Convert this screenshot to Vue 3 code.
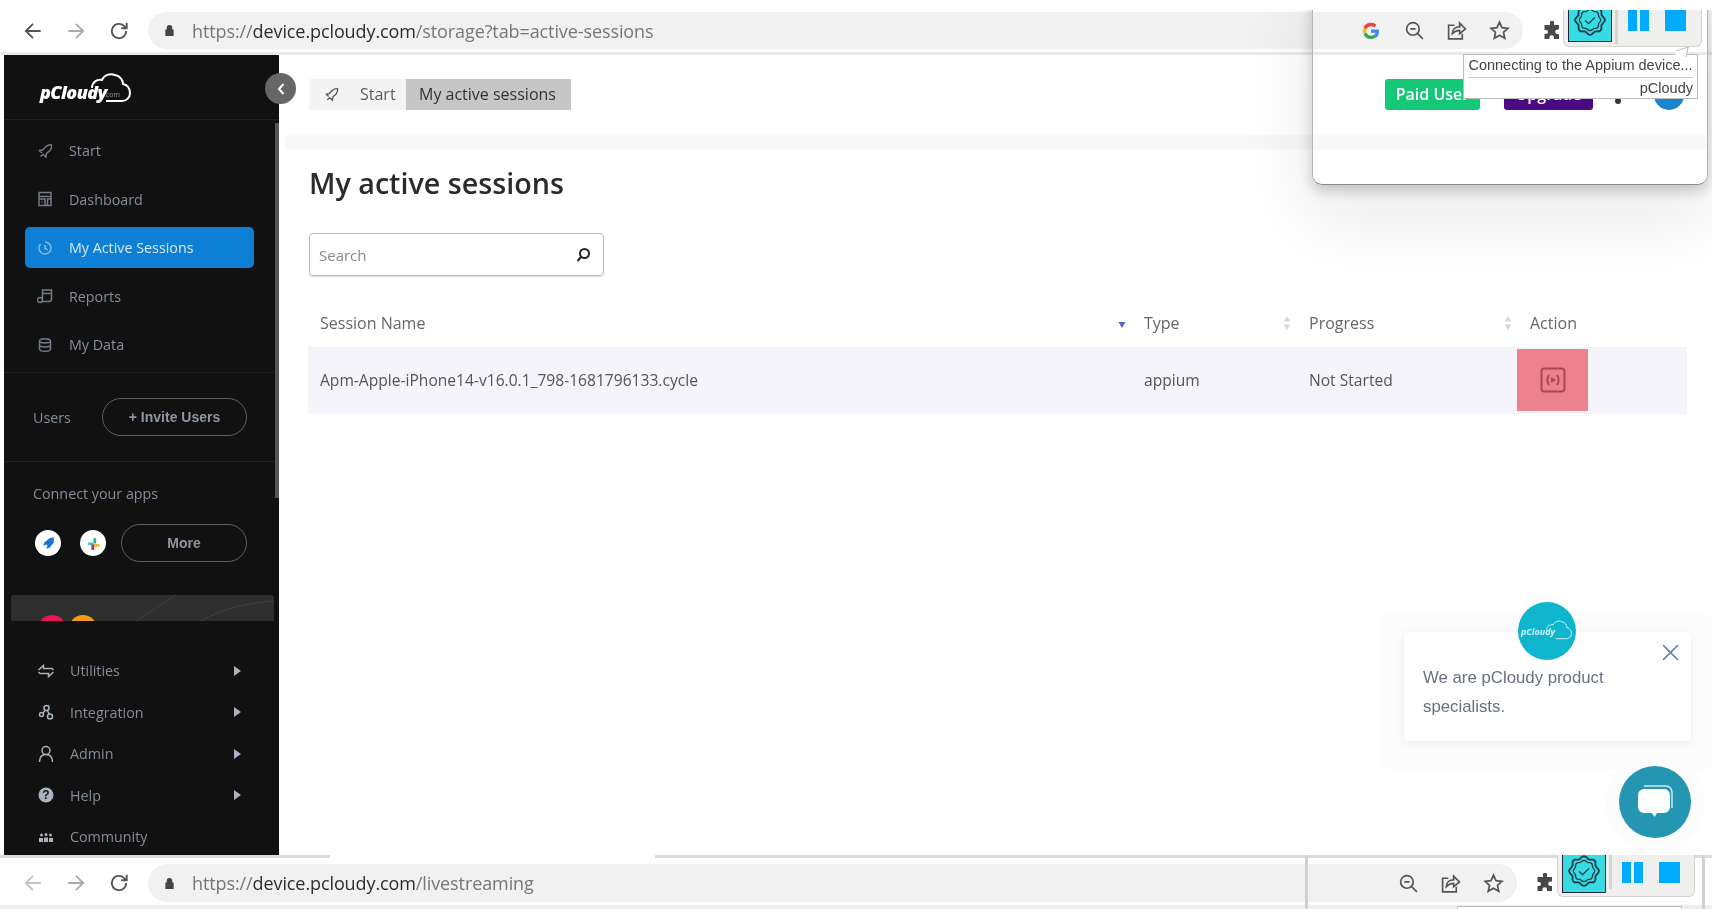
<script setup>
const navTop = [
  { label: 'Start', icon: 'rocket' },
  { label: 'Dashboard', icon: 'dash' },
  { label: 'My Active Sessions', icon: 'clock', active: true },
  { label: 'Reports', icon: 'report' },
  { label: 'My Data', icon: 'data' },
]
const navBottom = [
  { label: 'Utilities', icon: 'util', arrow: true },
  { label: 'Integration', icon: 'integ', arrow: true },
  { label: 'Admin', icon: 'admin', arrow: true },
  { label: 'Help', icon: 'help', arrow: true },
  { label: 'Community', icon: 'comm' },
]
const columns = [
  { label: 'Session Name', sort: 'down' },
  { label: 'Type', sort: 'both' },
  { label: 'Progress', sort: 'both' },
  { label: 'Action' },
]
// scalloped seal outline for the extension badge
function seal(cx, cy, r, lobes, depth) {
  let d = ''
  const steps = lobes * 8
  for (let i = 0; i < steps; i++) {
    const a = (i / steps) * Math.PI * 2
    const rr = r + depth * Math.cos(a * lobes)
    d += (i ? 'L' : 'M') + (cx + rr * Math.cos(a)).toFixed(2) + ' ' + (cy + rr * Math.sin(a)).toFixed(2)
  }
  return d + 'Z'
}
const sealOuter = seal(17, 17, 13, 8, 1.1)
const sealInner = seal(17, 17, 9.5, 8, 0.6)
</script>

<template>
  <div class="page">
    <header class="chrome top">
      <svg class="cb" viewBox="0 0 20 20"><path d="M17 10H4M10 3.500 3.500 10l6.500 6.500" /></svg>
      <svg class="cb dim" viewBox="0 0 20 20"><path d="M3 10h13M10 3.500 16.500 10 10 16.500" /></svg>
      <svg class="cb" viewBox="0 0 20 20"><path d="M16.500 10a6.500 6.500 0 1 1-2-4.700L17 7.500M17 2.500v5h-5" /></svg>
      <div class="pill">
        <svg class="lock" viewBox="0 0 12 14"><path d="M3 6V4a3 3 0 0 1 6 0v2h1.500v7h-9V6z" /></svg>
        <span class="url"><i>https://</i>device.pcloudy.com<i>/storage?tab=active-sessions</i></span>
        <div class="pill-icons">
          <svg class="g" viewBox="0 0 20 20">
            <path d="M18 10.200c0-.6-.1-1.200-.2-1.700H10v3.300h4.500a3.900 3.900 0 0 1-1.700 2.500l2.700 2.100c1.600-1.500 2.500-3.600 2.500-6.200z" fill="#4285f4" />
            <path d="M10 18c2.200 0 4-.7 5.500-2l-2.700-2.100c-.7.500-1.700.8-2.800.8-2.100 0-3.900-1.400-4.600-3.400L2.600 13.500A8 8 0 0 0 10 18z" fill="#34a853" />
            <path d="M5.400 11.300a4.800 4.800 0 0 1 0-3.100L2.600 6a8 8 0 0 0 0 7.200z" fill="#fbbc05" />
            <path d="M10 5.300c1.200 0 2.300.4 3.100 1.200l2.400-2.400A8 8 0 0 0 2.600 6l2.800 2.200C6.100 6.700 7.900 5.300 10 5.300z" fill="#ea4335" />
          </svg>
          <svg class="ci" viewBox="0 0 20 20"><circle cx="8.500" cy="8.500" r="6" /><path d="M13 13l5 5M6 8.500h5" /></svg>
          <svg class="ci" viewBox="0 0 20 20"><path d="M8 5H2.500v13h13v-5M6 13c0-4 3-6.500 7-6.500V3l5.500 5.500L13 13V9.800c-3 0-5 1-7 3.200z" /></svg>
          <svg class="ci" viewBox="0 0 20 20"><path d="M10 2l2.400 5.300 5.600.6-4.200 3.800 1.200 5.700-5-2.900-5 2.900 1.200-5.700L2 7.900l5.600-.6z" /></svg>
        </div>
      </div>
      <svg class="puzzle" viewBox="0 0 20 20"><path d="M8 1.500a2 2 0 0 1 4 0V4h5v4.500h-1.500a2.300 2.300 0 0 0 0 4.600H17V18h-5v-1.500a2.300 2.300 0 0 0-4.600 0V18H2.500v-5H4a2 2 0 0 0 0-4H2.500V4H8z" /></svg>
    </header>

    <div class="main">
      <aside class="side">
        <div class="logo">
          <span class="logo-text">pCloudy</span>
          <span class="logo-com">.com</span>
          <svg class="logo-cloud" viewBox="0 0 42 32"><path d="M2 17c0-6 5-9 10-8 2-5 8-7 13-5 5 1 8 5 8 9 4 1 7 4 7 9 0 5-4 8-8 8H16" /></svg>
        </div>
        <nav class="nav">
          <a v-for="n in navTop" :key="n.label" class="item" :class="{ active: n.active }">
            <svg class="ni" viewBox="0 0 16 16">
              <path v-if="n.icon === 'rocket'" d="M2 7.500l3.500-.5 3.500-3.500c2-1.500 4-2 5.500-1.500.3 1.500-.2 3.500-1.500 5.500L9.500 10.500 9 14l-3-2.500-2.500 2M2 7.500l3 2.500" />
              <path v-else-if="n.icon === 'dash'" d="M2 1.500h12v13H2zM2 5.500h12M2 8h6v6.500M4.500 11h1M10.500 8h3.500v6.500h-3.500z" />
              <path v-else-if="n.icon === 'clock'" d="M8 2a6 6 0 1 1-6 6c0-1.500.5-2.800 1.500-4M8 5v3.500l2.500 1" />
              <path v-else-if="n.icon === 'report'" d="M5.500 11V2h9v9M5.500 5.500h9M5.500 12a2.500 2.500 0 1 1-5 0 2.500 2.500 0 0 1 5 0zM14.500 11a2.500 2.500 0 0 1-2.500 2.500H5.500" />
              <path v-else d="M2.500 4c0-3 11-3 11 0v8c0 3-11 3-11 0zM2.500 4c0 2.500 11 2.500 11 0M2.500 8c0 2.500 11 2.500 11 0" />
            </svg>
            <span>{{ n.label }}</span>
          </a>
        </nav>
        <div class="users">
          <span>Users</span>
          <button class="outline invite">+ Invite Users</button>
        </div>
        <div class="apps">
          <div class="apps-label">Connect your apps</div>
          <div class="apps-row">
            <span class="app"><svg viewBox="0 0 16 16"><path d="M13 2 9 3 4 7l-1 3 3-1 1 1-1 3 3-1 4-5z" fill="#1478d8" /></svg></span>
            <span class="app"><svg viewBox="0 0 16 16"><rect x="3" y="7" width="5" height="2.500" fill="#36c5f0" /><rect x="8" y="3" width="2.500" height="5" fill="#2eb67d" /><rect x="8.500" y="8.500" width="5" height="2.500" fill="#ecb22e" /><rect x="6" y="9" width="2.500" height="5" fill="#e01e5a" /></svg></span>
            <button class="outline more">More</button>
          </div>
        </div>
        <div class="promo">
          <svg class="promo-lines" viewBox="0 0 263 26"><path d="M125 26 165 0M190 26c20-12 45-18 73-20" /></svg>
          <span class="dot pink"></span><span class="dot orange"></span>
        </div>
        <nav class="nav2">
          <a v-for="n in navBottom" :key="n.label" class="item2">
            <svg class="ni2" viewBox="0 0 18 18">
              <path v-if="n.icon === 'util'" d="M1.500 8 6.500 3.500V6.500H15l1.500 1.500M16.500 10 11.500 14.500V11.500H3L1.500 10" />
              <path v-else-if="n.icon === 'integ'" d="M9.500 2.500a2.500 2.500 0 1 1 0 5 2.500 2.500 0 0 1 0-5zM4.500 9.500a2 2 0 1 1 0 4 2 2 0 0 1 0-4zM13 11a2.500 2.500 0 1 1 0 5 2.500 2.500 0 0 1 0-5zM8 7.500l-2 2.500M10.500 7.500l1.500 3.500" />
              <path v-else-if="n.icon === 'admin'" d="M9 1.500a4 4 0 1 1 0 8 4 4 0 0 1 0-8zM2.500 17c0-5 2-7.500 6.500-7.500s6.500 2.500 6.500 7.500" />
              <template v-else-if="n.icon === 'help'">
                <circle cx="9" cy="9" r="7.500" fill="#aab2bd" stroke="none" />
                <text x="9" y="13" class="q">?</text>
              </template>
              <path v-else class="filled" d="M3 7a1.500 1.500 0 1 1 3 0 1.500 1.500 0 0 1-3 0zM7.500 6.500a1.500 1.500 0 1 1 3 0 1.500 1.500 0 0 1-3 0zM12 7a1.500 1.500 0 1 1 3 0 1.500 1.500 0 0 1-3 0zM2 10h4v4H2zM7 9.500h4V14H7zM12 10h4v4h-4z" />
            </svg>
            <span class="lbl">{{ n.label }}</span>
            <span v-if="n.arrow" class="tri"></span>
          </a>
        </nav>
        <span class="scroll"></span>
      </aside>

      <main class="content">
        <div class="head">
          <div class="crumbs">
            <span class="crumb">
              <svg class="crumb-ic" viewBox="0 0 16 16"><path d="M2 7.500l3.500-.5 3.500-3.500c2-1.500 4-2 5.500-1.500.3 1.500-.2 3.500-1.500 5.500L9.500 10.500 9 14l-3-2.500-2.500 2M2 7.500l3 2.500" /></svg>
              Start
            </span>
            <span class="crumb on">My active sessions</span>
          </div>
          <div class="head-right">
            <span class="btn green">Paid User</span>
            <span class="btn purple">Upgrade</span>
            <span class="bell"></span>
            <span class="avatar"></span>
          </div>
        </div>
        <div class="band"></div>
        <h1>My active sessions</h1>
        <label class="search">
          <span>Search</span>
          <svg viewBox="0 0 16 16"><circle cx="9.500" cy="6.500" r="4.500" /><path d="M6 10l-3.500 4" /></svg>
        </label>
        <div class="table">
          <div class="row hdr">
            <div v-for="c in columns" :key="c.label" class="cell">
              <span>{{ c.label }}</span>
              <svg v-if="c.sort === 'both'" class="sort" viewBox="0 0 8 14"><path d="M4 0l3.500 5.500h-7zM4 14 .5 8.500h7z" /></svg>
              <svg v-else-if="c.sort === 'down'" class="sort" viewBox="0 0 8 14"><path class="blue" d="M.5 6h7L4 12z" /></svg>
            </div>
          </div>
          <div class="row body">
            <div class="cell">Apm-Apple-iPhone14-v16.0.1_798-1681796133.cycle</div>
            <div class="cell">appium</div>
            <div class="cell">Not Started</div>
            <div class="cell action">
              <div class="red">
                <svg viewBox="0 0 26 26"><rect x="1.500" y="1.500" width="23" height="23" rx="3" /><path d="M9 8c-2 3-2 7 0 10M17 8c2 3 2 7 0 10" /><path class="play" d="M11 10l5 3-5 3z" /></svg>
              </div>
            </div>
          </div>
        </div>
      </main>
    </div>

    <footer class="chrome bottom">
      <svg class="cb faint" viewBox="0 0 20 20"><path d="M17 10H4M10 3.500 3.500 10l6.500 6.500" /></svg>
      <svg class="cb dim" viewBox="0 0 20 20"><path d="M3 10h13M10 3.500 16.500 10 10 16.500" /></svg>
      <svg class="cb" viewBox="0 0 20 20"><path d="M16.500 10a6.500 6.500 0 1 1-2-4.700L17 7.500M17 2.500v5h-5" /></svg>
      <div class="pill pill2">
        <svg class="lock" viewBox="0 0 12 14"><path d="M3 6V4a3 3 0 0 1 6 0v2h1.500v7h-9V6z" /></svg>
        <span class="url"><i>https://</i>device.pcloudy.com<i>/livestreaming</i></span>
        <div class="pill-icons">
          <svg class="ci" viewBox="0 0 20 20"><circle cx="8.500" cy="8.500" r="6" /><path d="M13 13l5 5M6 8.500h5" /></svg>
          <svg class="ci" viewBox="0 0 20 20"><path d="M8 5H2.500v13h13v-5M6 13c0-4 3-6.500 7-6.500V3l5.500 5.500L13 13V9.800c-3 0-5 1-7 3.200z" /></svg>
          <svg class="ci" viewBox="0 0 20 20"><path d="M10 2l2.400 5.300 5.600.6-4.200 3.800 1.200 5.700-5-2.900-5 2.900 1.200-5.700L2 7.900l5.600-.6z" /></svg>
        </div>
      </div>
      <svg class="puzzle p2" viewBox="0 0 20 20"><path d="M8 1.500a2 2 0 0 1 4 0V4h5v4.500h-1.500a2.300 2.300 0 0 0 0 4.600H17V18h-5v-1.500a2.300 2.300 0 0 0-4.600 0V18H2.500v-5H4a2 2 0 0 0 0-4H2.500V4H8z" /></svg>
    </footer>

    <!-- the extension popup lying over the first window -->
    <div class="popup"></div>
    <div class="whitetop"></div>
    <div class="ext ext1">
      <span class="badge"><svg viewBox="0 0 34 34"><path :d="sealOuter" /><path :d="sealInner" class="thin" /><path d="M12.500 17.500l3.200 3 6-6" class="thin" /></svg></span>
      <span class="sep"></span>
      <span class="pause"><b></b><b></b></span>
      <span class="stop"></span>
    </div>
    <div class="tip">
      <div class="tip-a">Connecting to the Appium device...</div>
      <div class="tip-b">pCloudy</div>
    </div>
    <div class="window2"></div>
    <div class="ext ext2">
      <span class="badge"><svg viewBox="0 0 34 34"><path :d="sealOuter" /><path :d="sealInner" class="thin" /><path d="M12.500 17.500l3.200 3 6-6" class="thin" /></svg></span>
      <span class="sep"></span>
      <span class="pause"><b></b><b></b></span>
      <span class="stop"></span>
    </div>
    <div class="tip2"></div>

    <button class="collapse"><svg viewBox="0 0 10 14"><path d="M7.500 2 3 7l4.500 5" /></svg></button>

    <div class="chat-card">
      <p>We are pCloudy product specialists.</p>
      <svg class="x" viewBox="0 0 16 16"><path d="M1 1l14 14M15 1 1 15" /></svg>
      <span class="chat-avatar">
        <span>pCloudy</span>
        <svg viewBox="0 0 42 32"><path d="M2 17c0-6 5-9 10-8 2-5 8-7 13-5 5 1 8 5 8 9 4 1 7 4 7 9 0 5-4 8-8 8H16" /></svg>
      </span>
    </div>
    <button class="chat-btn">
      <svg viewBox="0 0 40 40"><path d="M9 4h22a6 6 0 0 1 6 6v16" class="back" /><path d="M9 7h20a6 6 0 0 1 6 6v12a6 6 0 0 1-6 6h-7l-2.500 4-2.500-4H9a6 6 0 0 1-6-6V13a6 6 0 0 1 6-6z" class="front" /></svg>
    </button>
  </div>
</template>

<style>
html, body { margin: 0; background: #fff; }
</style>

<style scoped>
.page {
  width: 1712px; height: 909px; overflow: hidden; position: relative;
  display: flex; flex-direction: column; background: #fff;
  font-family: "Open Sans", "Liberation Sans", sans-serif; color: #444;
  filter: blur(.7px);
}

/* browser chrome */
.chrome { display: flex; align-items: center; box-sizing: border-box; padding-left: 22px; flex: none; }
.top { height: 55px; padding-top: 9px; border-bottom: 3px solid #e9e9e9; }
.bottom { height: 54px; border-top: 3px solid #dcdcdc; border-bottom: 4px solid #eee; padding-top: 3px; position: relative; }
.bottom::before { content: ""; position: absolute; left: 330px; width: 325px; top: -3px; height: 3px; background: #fff; }
.cb { width: 22px; height: 22px; margin-right: 21px; fill: none; stroke: #555; stroke-width: 1.700; flex: none; }
.cb.dim { stroke: #aaa; }
.cb.faint { stroke: #c4c4c4; }
.pill {
  width: 1375px; height: 37px; margin-left: -3px; background: #f1f1f2; border-radius: 19px;
  display: flex; align-items: center; padding-left: 16px; box-sizing: border-box; flex: none;
}
.pill2 { height: 38px; width: 1369px; }
.lock { width: 11px; height: 13px; fill: #444; margin-right: 17px; }
.url { font-size: 18px; color: #2c2c2c; letter-spacing: -.1px; white-space: nowrap; }
.url i { font-style: normal; color: #777; }
.pill-icons { margin-left: auto; display: flex; align-items: center; gap: 21.500px; padding-right: 13.500px; }
.g { width: 20px; height: 20px; margin-right: 1px; }
.ci { width: 21px; height: 21px; fill: none; stroke: #555; stroke-width: 1.600; }
.puzzle { width: 20px; height: 20px; fill: #484848; margin-left: 19px; flex: none; }
.puzzle.p2 { margin-left: 18px; }

/* main */
.main { height: 800px; display: flex; flex: none; position: relative; }
.side {
  width: 275px; margin-left: 4px; background: #111; color: #858d9b; position: relative; overflow: hidden;
  font-size: 14.300px; flex: none; height: 800px;
}
.logo { height: 65px; border-bottom: 1px solid #222; box-sizing: border-box; position: relative; padding: 25px 0 0 36px; line-height: 25px; }
.logo-text { font-family: "Open Sans", sans-serif; font-style: italic; font-weight: 800; font-size: 18px; color: #fff; letter-spacing: -.6px; }
.logo-com { position: absolute; left: 100px; top: 36px; font-size: 7px; line-height: 8px; color: #999; }
.logo-cloud { position: absolute; left: 86px; top: 16px; width: 42px; height: 32px; fill: none; stroke: #fff; stroke-width: 2; }
.nav { height: 253px; padding: 10px 25px 0 21px; box-sizing: border-box; border-bottom: 1px solid #222; display: flex; flex-direction: column; gap: 7.500px; }
.item { height: 41px; display: flex; align-items: center; gap: 16px; padding-left: 12px; border-radius: 5px; flex: none; }
.item.active { background: #0d80d5; color: #d5e8f7; }
.ni { width: 16px; height: 16px; fill: none; stroke: #737a85; stroke-width: 1.500; flex: none; }
.active .ni { stroke: #7fbce8; }
.users { height: 89px; padding: 0 32px 0 29px; box-sizing: border-box; border-bottom: 1px solid #222; display: flex; align-items: center; justify-content: space-between; }
.outline {
  background: none; border: 1.500px solid #5b6068; border-radius: 19px; color: #8e96a4; height: 38px;
  font-family: "Liberation Sans", sans-serif; font-size: 14px; font-weight: 700; box-sizing: border-box;
}
.invite { width: 145px; }
.apps { height: 133px; padding: 21px 32px 0 29px; box-sizing: border-box; }
.apps-label { height: 21px; line-height: 21px; }
.apps-row { margin-top: 20px; margin-left: 3px; display: flex; align-items: center; }
.app { width: 26px; height: 26px; border-radius: 50%; background: #fff; display: flex; align-items: center; justify-content: center; margin-right: 19px; flex: none; margin-left: -1px; }
.app + .app { margin-left: 0; margin-right: 15px; }
.app svg { width: 17px; height: 17px; }
.more { width: 126px; }
.promo { height: 26px; background: #2e2e2e; margin: 0 5px 0 7px; border-radius: 3px 3px 0 0; position: relative; overflow: hidden; display: flex; gap: 4px; padding: 20px 0 0 27px; box-sizing: border-box; }
.promo-lines { position: absolute; inset: 0; fill: none; stroke: #404040; }
.dot { width: 28px; height: 28px; border-radius: 50%; flex: none; }
.pink { background: #e8174f; }
.orange { background: #f39c12; margin-left: -1px; }
.nav2 { padding: 29px 0 0 33px; }
.item2 { height: 41.500px; display: flex; align-items: center; }
.ni2 { width: 18px; height: 18px; fill: none; stroke: #aab2bd; stroke-width: 1.500; margin-right: 15px; flex: none; }
.ni2 .filled { fill: #aab2bd; stroke: none; }
.q { font: 700 12px "Liberation Sans", sans-serif; fill: #111; stroke: none; text-anchor: middle; }
.lbl { width: 165px; }
.tri { border-left: 7px solid #aab2bd; border-top: 5px solid transparent; border-bottom: 5px solid transparent; margin-left: -1px; }
.scroll { position: absolute; right: 0; top: 68px; width: 4px; height: 375px; background: #555; }

/* content */
.content { flex: 1; min-width: 0; padding-top: 24px; box-sizing: border-box; }
.head { height: 31px; margin: 0 0 0 30px; display: flex; justify-content: space-between; }
.crumbs { display: flex; font-size: 16px; height: 31px; line-height: 31px; }
.crumb { background: #f4f4f4; color: #5a5a5a; width: 97px; display: flex; align-items: center; gap: 21px; padding-left: 15px; box-sizing: border-box; }
.crumb-ic { width: 15px; height: 15px; fill: none; stroke: #555; stroke-width: 1.400; flex: none; }
.crumb.on { background: #c6c6c6; color: #333; width: 165px; padding-left: 13px; }
.head-right { display: flex; align-items: center; padding-right: 28px; }
.btn { height: 31px; line-height: 31px; border-radius: 3px; color: #fff; font-size: 16px; font-weight: 600; text-align: center; }
.green { width: 95px; background: #14c878; }
.purple { width: 89px; margin-left: 24px; background: #4b0a82; }
.bell { width: 6px; height: 6px; border-radius: 50%; background: #333; margin: 12px 0 0 22px; }
.avatar { width: 30px; height: 30px; border-radius: 50%; background: #1a86d0; margin-left: 33px; }
.band { height: 14px; margin: 25px 5px 0 6px; background: #f8f8f8; }
h1 { margin: 14px 0 0 30px; font-size: 28.700px; line-height: 40px; font-weight: 600; color: #2b2b2b; }
.search {
  margin: 30px 0 0 30px; width: 295px; height: 43px; box-sizing: border-box; border: 1.500px solid #bbb; border-radius: 4px;
  display: flex; align-items: center; justify-content: space-between; padding: 0 12px 0 9px; color: #888; font-size: 15px; box-shadow: 0 1px 1px #ddd;
}
.search svg { width: 16px; height: 16px; fill: none; stroke: #222; stroke-width: 2; }
.table { margin: 27px 25px 0 29px; }
.row { display: grid; grid-template-columns: 824px 165px 221px 1fr; }
.hdr { height: 44px; font-size: 16px; color: #666; }
.body { height: 67px; background: #f4f4fa; font-size: 15.600px; color: #555; }
.cell { display: flex; align-items: center; justify-content: space-between; padding: 0 6px 0 12px; }
.hdr .cell { padding-bottom: 5px; box-sizing: border-box; }
.body .cell { padding-bottom: 2px; }
.body .action { padding: 0; justify-content: flex-start; }
.sort { width: 8px; height: 14px; fill: #d8d8d8; flex: none; }
.sort .blue { fill: #5b5fd6; }
.red { width: 71px; height: 62px; background: #ec828c; margin: 0 0 2px -1px; display: flex; align-items: center; justify-content: center; }
.red svg { width: 26px; height: 26px; fill: none; stroke: #a84656; stroke-width: 2; }
.red .play { fill: #a84656; stroke: none; }

/* overlays */
.whitetop { position: absolute; left: 0; right: 0; top: 0; height: 10px; background: #fff; }
.popup {
  position: absolute; left: 1312px; width: 396px; top: -10px; height: 195px; box-sizing: border-box;
  border: 1.500px solid #b5b5b5; border-bottom-color: #8a8a8a; border-radius: 10px;
  box-shadow: 0 6px 14px rgba(0, 0, 0, .2), 0 30px 70px 10px rgba(0, 0, 0, .07);
}
.ext { position: absolute; display: flex; background: #efefed; border: 1px solid #d5d5d0; border-top: none; border-radius: 0 0 6px 6px; box-sizing: border-box; height: 37px; width: 139px; padding-left: 4px; }
.ext1 { left: 1563px; top: 10px; }
.ext2 { left: 1557px; top: 855px; height: 42px; width: 138px; z-index: 1; }
.badge { width: 44px; height: 32px; background: #36dbe4; border: 1.500px solid #223; border-top: none; box-sizing: border-box; overflow: hidden; display: flex; justify-content: center; flex: none; }
.ext2 .badge { height: 38px; }
.badge svg { width: 36px; height: 36px; margin-top: -8px; fill: none; stroke: #1e3b45; stroke-width: 1.700; flex: none; }
.badge .thin { stroke-width: 1.200; }
.ext2 .badge svg { margin-top: -2px; }
.sep { width: 3px; height: 34px; background: #d4d4d0; margin-left: 3px; flex: none; }
.pause { display: flex; gap: 3px; margin: 0 16px 0 10px; height: 21px; }
.ext2 .pause, .ext2 .stop { margin-top: 7px; }
.pause b { width: 9px; height: 21px; background: #00aaff; }
.stop { width: 21px; height: 21px; background: #00aaff; }
.tip {
  position: absolute; left: 1463px; top: 54px; width: 235px; height: 45px; background: #fff; border: 1px solid #bbb;
  box-sizing: border-box; font-family: "Liberation Sans", sans-serif; font-size: 14.500px; color: #444; padding: 0 4px;
}
.tip::before { content: ""; position: absolute; right: 10px; top: -7px; width: 10px; height: 10px; background: #fff; border-top: 1px solid #bbb; border-right: 1px solid #bbb; transform: skewX(-30deg) rotate(-20deg); }
.tip-a { height: 22px; line-height: 21px; border-bottom: 1px solid #ccd; white-space: nowrap; text-align: center; }
.tip-b { height: 20px; line-height: 21px; text-align: right; }
.tip2 { position: absolute; left: 1457px; top: 906px; width: 225px; height: 6px; border: 1px solid #bbb; background: #fff; box-sizing: border-box; }
.window2 { position: absolute; left: 1305px; width: 400px; top: 855px; height: 60px; box-sizing: border-box; border: 3px solid #d0d0d0; border-top: none; }
.collapse {
  position: absolute; left: 265px; top: 73px; width: 31px; height: 31px; border-radius: 50%; background: #666; border: none; padding: 0;
  display: flex; align-items: center; justify-content: center;
}
.collapse svg { width: 10px; height: 14px; fill: none; stroke: #fff; stroke-width: 2; }

.chat-card {
  position: absolute; left: 1404px; top: 632px; width: 287px; height: 109px; box-sizing: border-box; background: #fff; border-radius: 4px;
  padding: 31px 19px 0; font-family: "Liberation Sans", sans-serif; font-size: 16.800px; color: #66717f;
  box-shadow: 0 2px 8px rgba(0, 0, 0, .08), 0 5px 0 24px #fcfcfc;
}
.chat-card p { margin: 0; line-height: 29px; width: 220px; }
.x { position: absolute; right: 12px; top: 12px; width: 17px; height: 17px; fill: none; stroke: #5f86ad; stroke-width: 1.500; }
.chat-avatar {
  position: absolute; left: 114px; top: -30px; width: 58px; height: 58px; border-radius: 50%; background: #0fb5cc;
  color: #cdf3f8; font-size: 9px; font-style: italic; font-weight: 700; font-family: "Open Sans", sans-serif; display: flex; align-items: center; padding-left: 3px; box-sizing: border-box;
}
.chat-avatar svg { position: absolute; left: 27px; top: 17px; width: 28px; height: 21px; fill: none; stroke: #cdf3f8; stroke-width: 1.500; }
.chat-btn {
  position: absolute; left: 1619px; top: 766px; width: 72px; height: 72px; border-radius: 50%; border: none; background: #2596b1; padding: 0;
  display: flex; align-items: center; justify-content: center; box-shadow: 0 0 0 14px #fcfcfc, 0 2px 6px rgba(0, 0, 0, .15);
}
.chat-btn svg { width: 40px; height: 40px; }
.chat-btn .front { fill: #fff; }
.chat-btn .back { fill: none; stroke: #fff; stroke-width: 1.500; opacity: .8; }
</style>
